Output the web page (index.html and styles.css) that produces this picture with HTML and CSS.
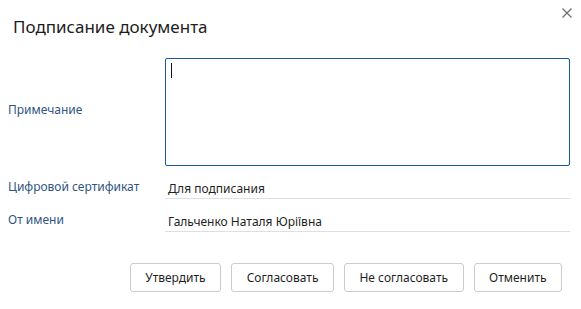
FILE: index.html
```html
<!DOCTYPE html>
<html lang="ru">
<head>
    <meta charset="UTF-8">
    <title>Подписание документа</title>
    <link rel="stylesheet" href="styles.css">
</head>
<body>
    <div class="dialog">
        <button class="close" aria-label="Закрыть">
            <svg width="12" height="12" viewBox="0 0 12 12">
                <path d="M1.5 1.5 L10.5 10.5 M10.5 1.5 L1.5 10.5" stroke="#6b6f75" stroke-width="1.3" fill="none"/>
            </svg>
        </button>
        <h1 class="title">Подписание документа</h1>

        <div class="form">
            <div class="row row-note">
                <label class="label">Примечание</label>
                <div class="note"><span class="caret"></span></div>
            </div>
            <div class="row">
                <label class="label">Цифровой сертификат</label>
                <div class="field">Для подписания</div>
            </div>
            <div class="row">
                <label class="label">От имени</label>
                <div class="field">Гальченко Наталя Юріївна</div>
            </div>
        </div>

        <div class="actions">
            <button class="btn">Утвердить</button>
            <button class="btn">Согласовать</button>
            <button class="btn">Не согласовать</button>
            <button class="btn">Отменить</button>
        </div>
    </div>
</body>
</html>
```

FILE: styles.css
```css
* {
    margin: 0;
    padding: 0;
    box-sizing: border-box;
    font-family: 'Noto Sans', 'Open Sans', sans-serif;
}

body {
    background: #ffffff;
    width: 581px;
    height: 309px;
}

.dialog {
    position: relative;
    padding: 15px 11px 0 8px;
}

.close {
    position: absolute;
    top: 7px;
    right: 8px;
    border: none;
    background: none;
    width: 12px;
    height: 12px;
}

.close svg {
    display: block;
}

.title {
    font-size: 17px;
    font-weight: 400;
    line-height: 24px;
    color: #1d1d1d;
    padding-left: 5px;
}

.form {
    display: flex;
    flex-direction: column;
    gap: 11px;
    margin-top: 19px;
}

.row {
    display: grid;
    grid-template-columns: 157px 1fr;
    align-items: end;
}

.row-note {
    align-items: center;
}

.label {
    font-size: 12px;
    line-height: 16px;
    color: #2f5583;
    padding-bottom: 4px;
}

.note {
    height: 108px;
    border: 1px solid #1559a6;
    border-radius: 2px;
    padding: 4px 5px;
}

.caret {
    display: block;
    width: 1px;
    height: 15px;
    background: #111;
}

.field {
    height: 22px;
    font-size: 12px;
    line-height: 16px;
    color: #1f1f1f;
    padding: 4px 3px 0;
    border-bottom: 1px solid #dcdfe3;
}

.actions {
    display: flex;
    justify-content: flex-end;
    gap: 10px;
    margin-top: 31px;
    padding-right: 8px;
}

.btn {
    height: 29px;
    border: 1px solid #c9cdd2;
    border-radius: 3px;
    background: #ffffff;
    font-size: 12px;
    color: #1f1f1f;
    padding: 0 14.5px;
}
```
